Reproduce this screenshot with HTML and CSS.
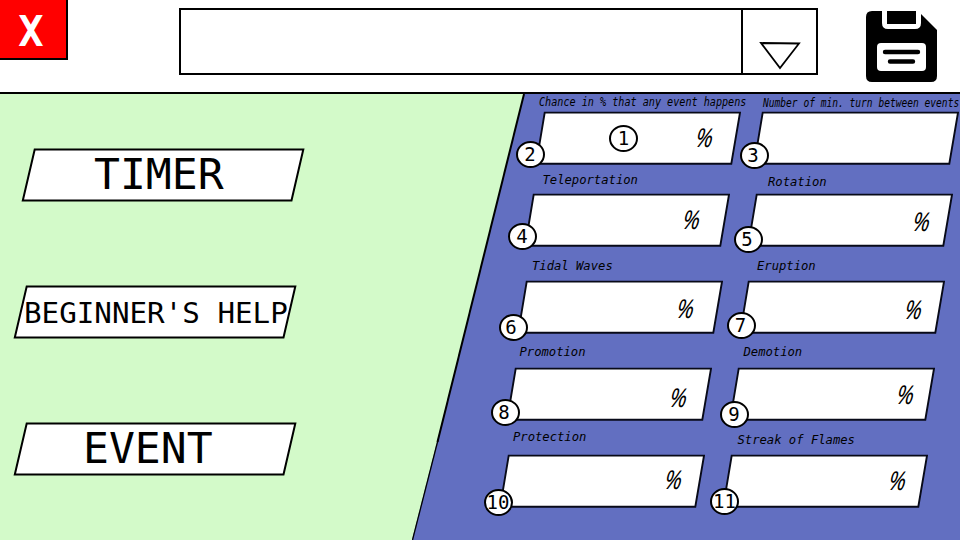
FILE: index.html
```html
<!DOCTYPE html>
<html lang="en">
<head>
<meta charset="utf-8">
<title>Event settings</title>
<link rel="stylesheet" href="styles.css">
</head>
<body>
<svg class="defs" width="0" height="0">
  <symbol id="slot" viewBox="0 0 206 54"><path d="M9.7 1.600H205L196.300 52.700H1.200Z" fill="#fff" stroke="#080a18" stroke-width="1.900"/></symbol>
  <symbol id="plate" viewBox="0 0 284 54"><path d="M13.700 1.600H282.300L270.500 52.500H1.800Z" fill="#fff" stroke="#000" stroke-width="2"/></symbol>
</svg>
<header class="top">
  <button class="close"><span>X</span></button>
  <div class="select">
    <div class="value"></div>
    <div class="arrow"><svg width="42" height="29" viewBox="0 0 42 29"><path d="M2 2L40 2.500L21 27Z" fill="#fff" stroke="#000" stroke-width="1.800"/></svg></div>
  </div>
  <svg class="save" width="71" height="71" viewBox="0 0 71 71">
    <path d="M6 0H54V2L71 19V65Q71 71 65 71H6Q0 71 0 65V6Q0 0 6 0Z"/>
    <path d="M16 0V12Q16 18 22 18H49Q55 18 55 12V0H50V13H21V0Z" fill="#fff"/>
    <rect x="11" y="32" width="49" height="28" rx="4" fill="#fff"/>
    <path d="M19 41H52M24 50.500H47" stroke="#000" stroke-width="4.400" stroke-linecap="round"/>
  </svg>
</header>
<main class="main">
  <svg class="backdrop" width="960" height="446" viewBox="0 0 960 446">
    <path d="M524 0H960V446H412L437 348Z" fill="#626fc1"/>
    <path d="M524 0L437.500 348" stroke="#000" stroke-width="2"/>
    <path d="M438 346L412.500 446" stroke="#000" stroke-width="1.300"/>
  </svg>
  <nav class="menu">
    <button class="plate timer"><svg><use href="#plate"/></svg><span>TIMER</span></button>
    <button class="plate help"><svg><use href="#plate"/></svg><span>BEGINNER'S HELP</span></button>
    <button class="plate event"><svg><use href="#plate"/></svg><span>EVENT</span></button>
  </nav>
  <section class="events">
    <div class="row r1">
      <div class="field chance"><label>Chance in % that any event happens</label><div class="slot"><svg><use href="#slot"/></svg><b>%</b><i class="n1">1</i><i class="n2">2</i></div></div>
      <div class="field turns"><label>Number of min. turn between events</label><div class="slot"><svg><use href="#slot"/></svg><i>3</i></div></div>
    </div>
    <div class="row r2">
      <div class="field teleport"><label>Teleportation</label><div class="slot"><svg><use href="#slot"/></svg><b>%</b><i>4</i></div></div>
      <div class="field rotation"><label>Rotation</label><div class="slot"><svg><use href="#slot"/></svg><b>%</b><i>5</i></div></div>
    </div>
    <div class="row r3">
      <div class="field tidal"><label>Tidal Waves</label><div class="slot"><svg><use href="#slot"/></svg><b>%</b><i>6</i></div></div>
      <div class="field eruption"><label>Eruption</label><div class="slot"><svg><use href="#slot"/></svg><b>%</b><i>7</i></div></div>
    </div>
    <div class="row r4">
      <div class="field promotion"><label>Promotion</label><div class="slot"><svg><use href="#slot"/></svg><b>%</b><i>8</i></div></div>
      <div class="field demotion"><label>Demotion</label><div class="slot"><svg><use href="#slot"/></svg><b>%</b><i>9</i></div></div>
    </div>
    <div class="row r5">
      <div class="field protection"><label>Protection</label><div class="slot"><svg><use href="#slot"/></svg><b>%</b><i>10</i></div></div>
      <div class="field flames"><label>Streak of Flames</label><div class="slot"><svg><use href="#slot"/></svg><b>%</b><i>11</i></div></div>
    </div>
  </section>
</main>
</body>
</html>
```
FILE: styles.css
```css
* { box-sizing: border-box; }
body {
  margin: 0;
  width: 960px;
  height: 540px;
  overflow: hidden;
  background: #fff;
  color: #000;
  font-family: "DejaVu Sans Mono", monospace;
}
button { border: 0; padding: 0; margin: 0; background: none; font: inherit; color: inherit; }
svg { display: block; flex: none; }
.defs { position: absolute; }

.top { display: flex; height: 94px; border-bottom: 2px solid #000; }
.close {
  width: 68px;
  height: 60px;
  background: #f00;
  border: solid #000;
  border-width: 0 2px 2px 0;
  color: #fff;
  font-size: 42px;
  font-weight: bold;
  line-height: 58px;
  padding: 3px 4px 0 0;
}
.select { display: flex; width: 639px; height: 67px; margin: 8px 0 0 111px; border: 2px solid #000; }
.value { flex: 1; }
.arrow { width: 75px; border-left: 2px solid #000; padding: 31px 0 0 16px; }
.save { margin: 11px 0 0 48px; }

.main { position: relative; display: flex; height: 446px; background: #d3fac9; }
.backdrop { position: absolute; left: 0; top: 0; }
.menu { position: relative; flex: none; width: 484px; padding-top: 54px; display: flex; flex-direction: column; gap: 83px; }
.plate { display: grid; width: 284px; height: 54px; margin-left: 13px; text-align: left; }
.plate svg, .plate span { grid-area: 1 / 1; }
.plate svg { width: 284px; height: 54px; }
.plate span {
  position: relative;
  white-space: pre;
  font-size: 42px;
  line-height: 54px;
  transform: scaleX(1.025);
  transform-origin: 0 0;
}
.timer { margin-left: 21px; }
.timer span { margin-left: 73px; }
.help span { font-size: 28px; margin-left: 11px; line-height: 57px; transform: scaleX(1.043); }
.event span { margin-left: 70px; }

.events { position: relative; flex: none; width: 476px; }
.row { display: flex; gap: 17px; height: 71px; margin-bottom: 16px; }
.r1 { margin: -1px 0 11px 51px; gap: 12px; }
.r2 { margin-left: 40px; }
.r3 { margin-left: 32.500px; gap: 16.500px; }
.r4 { margin-left: 21.500px; }
.r5 { margin-left: 14.500px; }
.field { flex: none; width: 206px; --lx: 16px; --ly: 0px; --sx: 1.043; --sy: 1; --px: 155px; --py: 0px; --bx: -20px; --by: 29px; --dx: 0px; }
.field label {
  display: block;
  height: 18px;
  line-height: 18px;
  white-space: pre;
  font-size: 11.700px;
  font-style: italic;
  transform: translate(var(--lx), var(--ly)) scale(var(--sx), var(--sy));
  transform-origin: 0 13px;
}
.slot { position: relative; height: 53px; display: grid; }
.slot svg { grid-area: 1 / 1; width: 206px; height: 54px; }
.slot b {
  grid-area: 1 / 1;
  z-index: 1;
  justify-self: start;
  margin-left: var(--px);
  font-family: "Noto Sans", sans-serif;
  font-weight: normal;
  font-style: italic;
  font-size: 26px;
  line-height: 52px;
  transform: translateY(var(--py)) skewX(-8deg) scaleX(.82);
  transform-origin: 0 27px;
}
.slot i {
  position: absolute;
  z-index: 2;
  left: var(--bx);
  top: var(--by);
  width: 29px;
  height: 27px;
  padding-right: var(--dx);
  border: 2px solid #000;
  border-radius: 50%;
  background: #fff;
  font-style: normal;
  font-size: 19px;
  line-height: 23px;
  display: flex;
  justify-content: center;
}
.slot .n1 { left: 74px; top: 14px; }

.chance { --lx: 4px; --ly: 0px; --sx: .867; --sy: 1.120; --px: 161px; --by: 30px; --bx: -19.500px; }
.turns { --lx: 10px; --ly: 1px; --sx: .820; --sy: 1.120; --by: 31px; --bx: -13px; --dx: 3px; }
.teleport { --lx: 18.500px; --ly: -4px; --px: 158.500px; --by: 30px; --bx: -16px; --dx: 1px; }
.rotation { --lx: 21px; --ly: -2px; --px: 165.500px; --py: 2px; --by: 33px; --bx: -13px; --dx: 3px; }
.tidal { --lx: 15px; --ly: -5px; --px: 160px; --py: 2px; --by: 34px; --bx: -17.500px; --dx: 5px; }
.eruption { --lx: 18px; --ly: -5px; --px: 165.500px; --py: 3px; --by: 32px; --bx: -12.500px; --dx: 1px; }
.promotion { --lx: 13.500px; --ly: -6px; --px: 164px; --py: 4px; --by: 31.500px; --bx: -14.500px; --dx: 3px; }
.demotion { --lx: 14.500px; --ly: -6px; --px: 168px; --py: 1px; --by: 34px; --bx: -8.500px; --dx: 1px; }
.protection { --lx: 14px; --ly: -8px; --px: 166px; --py: -1px; --by: 34.500px; --bx: -14.500px; --dx: 1px; }
.flames { --lx: 15.500px; --ly: -5px; --px: 167px; --py: 0px; --by: 34px; --bx: -11.500px; }
```
